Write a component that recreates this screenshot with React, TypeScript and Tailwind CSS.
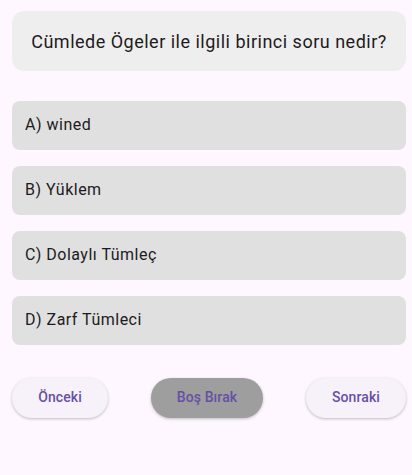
import React from "react";

const options = ["A) wined", "B) Yüklem", "C) Dolaylı Tümleç", "D) Zarf Tümleci"];

export default function App() {
  return (
    <div
      className="w-[412px] h-[475px] bg-[#fef7ff] pl-3 pr-[6px] pt-[11px]"
      style={{ fontFamily: "Roboto, 'Noto Sans', sans-serif" }}
    >
      <div className="h-[60px] rounded-xl bg-[#eeeeee] flex items-center justify-center">
        <p className="text-[18px] tracking-[0.5px] text-[#1d1b20]">
          Cümlede Ögeler ile ilgili birinci soru nedir?
        </p>
      </div>

      <div className="mt-[30px] flex flex-col gap-[16.5px]">
        {options.map((option) => (
          <div
            key={option}
            className="h-[48.5px] rounded-lg bg-[#e0e0e0] flex items-center pl-[13px]"
          >
            <span className="text-[16px] tracking-[0.5px] text-[#1d1b20]">{option}</span>
          </div>
        ))}
      </div>

      <div className="mt-[33px] flex items-center justify-between">
        <button className="h-10 w-[96px] rounded-full bg-[#f7f2fa] text-[14px] font-medium tracking-[0.1px] text-[#6750a4] shadow-[0_1px_3px_rgba(0,0,0,0.25)]">
          Önceki
        </button>
        <button className="h-10 w-[112px] rounded-full bg-[#9e9e9e] text-[14px] font-medium tracking-[0.1px] text-[#6750a4] shadow-[0_1px_3px_rgba(0,0,0,0.25)]">
          Boş Bırak
        </button>
        <button className="h-10 w-[100px] rounded-full bg-[#f7f2fa] text-[14px] font-medium tracking-[0.1px] text-[#6750a4] shadow-[0_1px_3px_rgba(0,0,0,0.25)]">
          Sonraki
        </button>
      </div>
    </div>
  );
}
